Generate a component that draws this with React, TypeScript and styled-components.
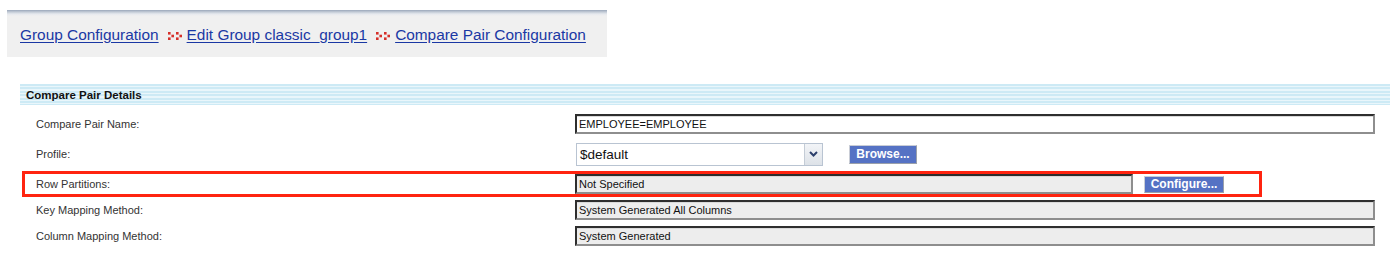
import styled, { createGlobalStyle } from "styled-components";

const GlobalStyle = createGlobalStyle`
  html, body {
    margin: 0;
    padding: 0;
    background: #ffffff;
    font-family: "Liberation Sans", Arial, sans-serif;
  }
`;

type Field = {
  label: string;
  value: string;
  readOnly?: boolean;
};

const crumbs = [
  "Group Configuration",
  "Edit Group classic_group1",
  "Compare Pair Configuration",
];

export default function App() {
  const keyFields: Field[] = [
    { label: "Key Mapping Method:", value: "System Generated All Columns", readOnly: true },
    { label: "Column Mapping Method:", value: "System Generated", readOnly: true },
  ];

  return (
    <Page>
      <GlobalStyle />
      <Breadcrumb>
        <CrumbList>
          {crumbs.map((c, i) => (
            <Crumb key={c}>
              {i > 0 && <Separator />}
              <CrumbLink href="#">{c}</CrumbLink>
            </Crumb>
          ))}
        </CrumbList>
      </Breadcrumb>

      <Section>
        <Band>Compare Pair Details</Band>
        <Rows>
          <Row $height={30}>
            <Label>Compare Pair Name:</Label>
            <Value>
              <TextBox $width={800}>EMPLOYEE=EMPLOYEE</TextBox>
            </Value>
          </Row>
          <Row $height={30}>
            <Label>Profile:</Label>
            <Value>
              <SelectBox>
                <SelectValue>$default</SelectValue>
                <SelectArrow>
                  <svg width="9" height="6" viewBox="0 0 9 6">
                    <path d="M1 1 L4.5 4.5 L8 1" fill="none" stroke="#2c3f6c" strokeWidth="2" />
                  </svg>
                </SelectArrow>
              </SelectBox>
              <Button $width={68} $height={19} $offset={26}>Browse...</Button>
            </Value>
          </Row>
          <Row $height={26} $highlight>
            <Label $highlight>Row Partitions:</Label>
            <Value>
              <TextBox $width={558} $readOnly>Not Specified</TextBox>
              <Button $width={80} $height={17} $offset={11}>Configure...</Button>
            </Value>
          </Row>
          {keyFields.map((f) => (
            <Row key={f.label} $height={26}>
              <Label>{f.label}</Label>
              <Value>
                <TextBox $width={800} $readOnly={f.readOnly}>{f.value}</TextBox>
              </Value>
            </Row>
          ))}
        </Rows>
      </Section>
    </Page>
  );
}

function Separator() {
  return (
    <SepIcon width="15" height="8" viewBox="0 0 15 8">
      <g fill="#d6302a">
        <rect x="0" y="0" width="2.6" height="2.6" />
        <rect x="0" y="5.4" width="2.6" height="2.6" />
        <rect x="3.4" y="2.7" width="2.6" height="2.6" />
        <rect x="8" y="0" width="2.6" height="2.6" />
        <rect x="8" y="5.4" width="2.6" height="2.6" />
        <rect x="11.4" y="2.7" width="2.6" height="2.6" />
      </g>
    </SepIcon>
  );
}

const Page = styled.div`
  padding: 10px 0 0 7px;
  width: 1396px;
  box-sizing: border-box;
`;

const Breadcrumb = styled.div`
  width: 600px;
  height: 47px;
  box-sizing: border-box;
  background: linear-gradient(to bottom, #9aa7ba 0px, #c3cbd6 2px, #e6e9ee 4px, #f0f0f0 6px);
  display: flex;
  align-items: center;
  padding: 2px 0 0 13px;
`;

const CrumbList = styled.div`
  display: flex;
  align-items: center;
`;

const Crumb = styled.span`
  display: flex;
  align-items: center;
  & + & {
    margin-left: 9px;
  }
`;

const SepIcon = styled.svg`
  margin-right: 4px;
  margin-top: 2px;
`;

const CrumbLink = styled.a`
  color: #1a38a4;
  font-size: 15.4px;
  text-decoration: underline;
  text-underline-offset: 2px;
  white-space: nowrap;
`;

const Section = styled.div`
  margin: 27px 0 0 13px;
  width: 1370px;
`;

const Band = styled.div`
  height: 21px;
  box-sizing: border-box;
  padding: 5px 0 0 6px;
  background: repeating-linear-gradient(
    to bottom,
    #cdeaf5 0px,
    #cdeaf5 2px,
    #e9f6fb 2px,
    #e9f6fb 3.4px
  );
  font-size: 11.5px;
  font-weight: bold;
  color: #111;
`;

const Rows = styled.div`
  padding: 4px 0 0 2px;
  display: flex;
  flex-direction: column;
`;

const Row = styled.div<{ $highlight?: boolean; $height: number }>`
  display: grid;
  grid-template-columns: ${(p) => (p.$highlight ? "550px" : "553px")} 1fr;
  align-items: center;
  box-sizing: border-box;
  height: ${(p) => p.$height}px;
  width: ${(p) => (p.$highlight ? "1240px" : "1368px")};
  border: ${(p) => (p.$highlight ? "3px solid #ff2410" : "none")};
  margin-top: ${(p) => (p.$highlight ? "2px" : "0")};
`;

const Label = styled.div<{ $highlight?: boolean }>`
  padding-left: ${(p) => (p.$highlight ? "11px" : "14px")};
  font-size: 11px;
  color: #333;
`;

const Value = styled.div`
  display: flex;
  align-items: center;
  height: 100%;
`;

const TextBox = styled.div<{ $width: number; $readOnly?: boolean }>`
  width: ${(p) => p.$width}px;
  height: 20px;
  box-sizing: border-box;
  background: ${(p) => (p.$readOnly ? "#ededed" : "#ffffff")};
  border-style: solid;
  border-width: 2px;
  border-color: #2e2e2e #8e8e8e #8e8e8e #2e2e2e;
  box-shadow: inset 0 1px 0 #d9d9d9;
  padding: 0 0 0 2px;
  font-size: 11px;
  color: #111;
  display: flex;
  align-items: center;
  white-space: nowrap;
`;

const SelectBox = styled.div`
  width: 247px;
  height: 23px;
  box-sizing: border-box;
  border: 1px solid #b9c4d2;
  background: #fff;
  display: flex;
  margin-left: 1px;
`;

const SelectValue = styled.div`
  flex: 1;
  display: flex;
  align-items: center;
  padding-left: 3px;
  font-size: 13.5px;
  color: #111;
`;

const SelectArrow = styled.div`
  width: 17px;
  border-left: 1px solid #c4ccd6;
  background: linear-gradient(to bottom, #f2f4f7, #dde2e8);
  display: flex;
  align-items: center;
  justify-content: center;
`;

const Button = styled.div<{ $width: number; $height: number; $offset: number }>`
  width: ${(p) => p.$width}px;
  height: ${(p) => p.$height}px;
  margin-left: ${(p) => p.$offset}px;
  box-sizing: border-box;
  background: #5572c4;
  border: 1px solid #c9cdd6;
  border-right-color: #9aa0aa;
  border-bottom-color: #9aa0aa;
  color: #fff;
  font-size: 12px;
  font-weight: bold;
  display: flex;
  align-items: center;
  justify-content: center;
  white-space: nowrap;
`;
